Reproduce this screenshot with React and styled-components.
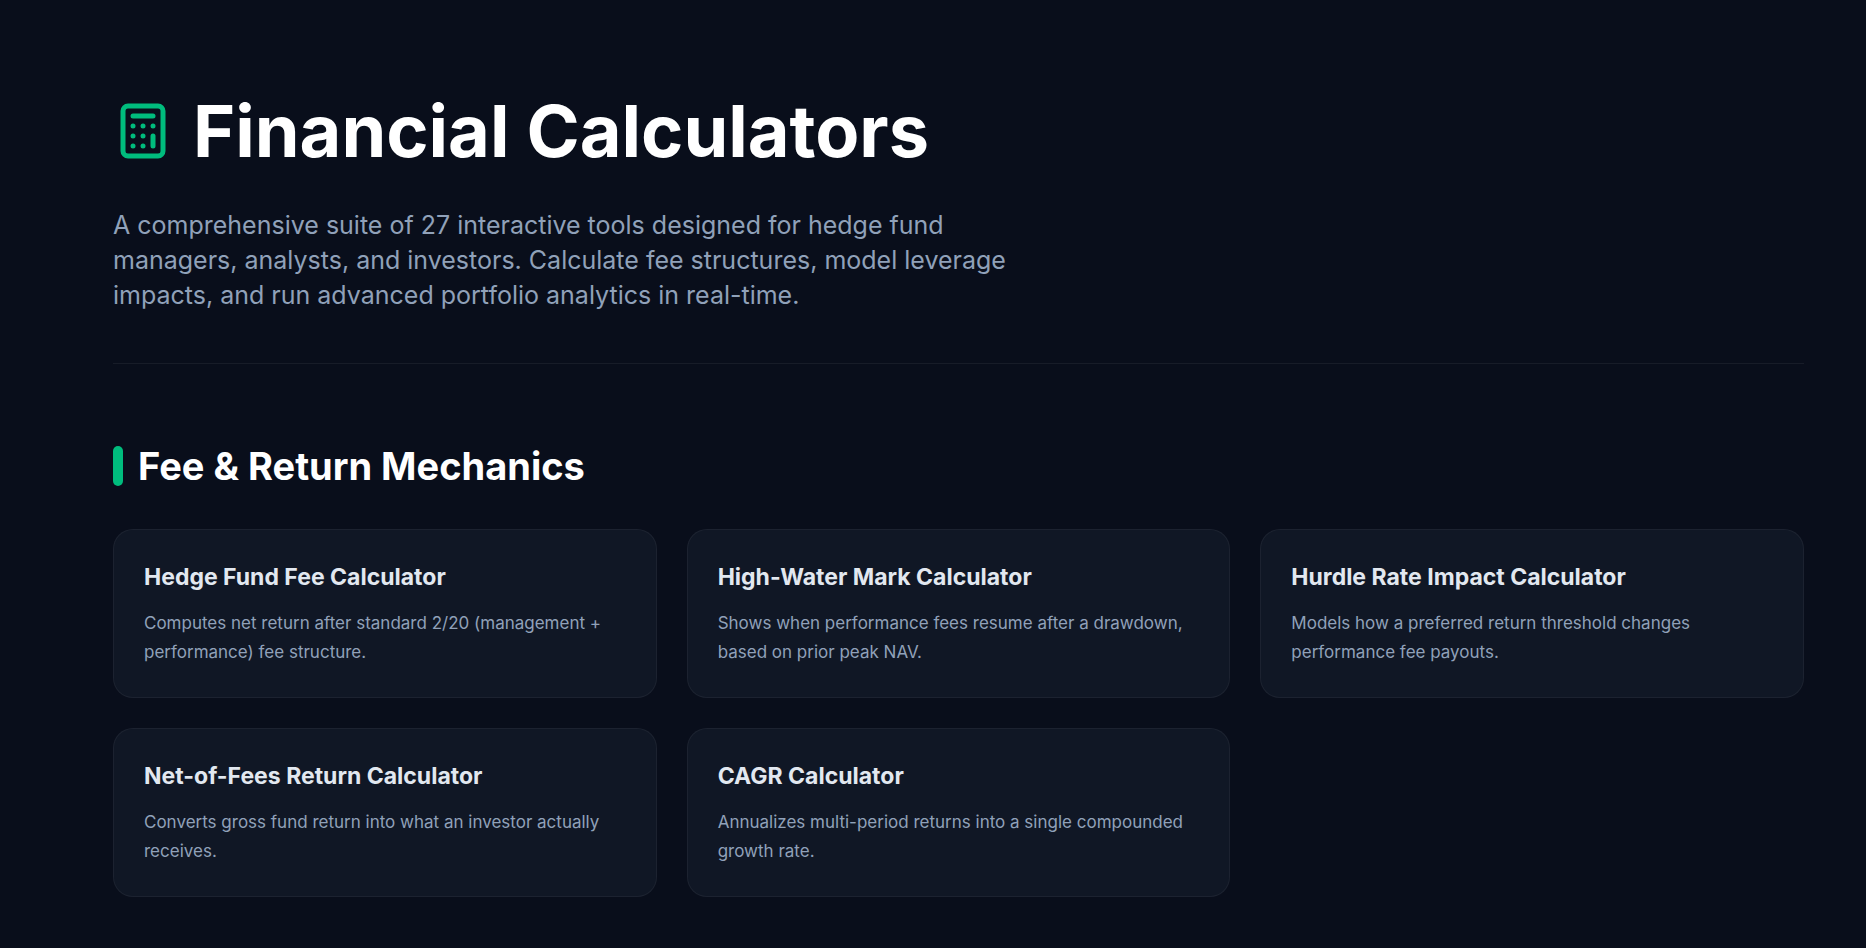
import React from 'react';
import { Calculator } from 'lucide-react';
import styled, { createGlobalStyle } from 'styled-components';

const feeTools = [
  {
    id: 'hedge-fund-fee',
    name: 'Hedge Fund Fee Calculator',
    description: 'Computes net return after standard 2/20 (management + performance) fee structure.',
  },
  {
    id: 'high-water-mark',
    name: 'High-Water Mark Calculator',
    description: 'Shows when performance fees resume after a drawdown, based on prior peak NAV.',
  },
  {
    id: 'hurdle-rate',
    name: 'Hurdle Rate Impact Calculator',
    description: 'Models how a preferred return threshold changes performance fee payouts.',
  },
  {
    id: 'net-of-fees',
    name: 'Net-of-Fees Return Calculator',
    description: 'Converts gross fund return into what an investor actually receives.',
  },
  {
    id: 'cagr',
    name: 'CAGR Calculator',
    description: 'Annualizes multi-period returns into a single compounded growth rate.',
  },
];

const App = () => {
  return (
    <>
      <GlobalStyle />
      <Page>
        <Header>
          <TitleRow>
            <Calculator size={60} color="#00bc7d" aria-hidden="true" />
            <Title>Financial Calculators</Title>
          </TitleRow>
          <Intro>
            A comprehensive suite of 27 interactive tools designed for hedge fund managers,
            analysts, and investors. Calculate fee structures, model leverage impacts, and run
            advanced portfolio analytics in real-time.
          </Intro>
        </Header>

        <section>
          <SectionTitle>
            <Accent />
            Fee &amp; Return Mechanics
          </SectionTitle>
          <CardGrid>
            {feeTools.map((tool) => (
              <Card key={tool.id} href={`#${tool.id}`}>
                <CardTitle>{tool.name}</CardTitle>
                <CardText>{tool.description}</CardText>
              </Card>
            ))}
          </CardGrid>
        </section>
      </Page>
    </>
  );
};

export default App;

const GlobalStyle = createGlobalStyle`
  * {
    box-sizing: border-box;
  }

  body {
    margin: 0;
    background-color: #090e1b;
    color: #ffffff;
    font-family: Inter, 'Liberation Sans', sans-serif;
  }
`;

const Page = styled.main`
  min-height: 100vh;
  padding: 93px 62px 50px 113px;

  @media (max-width: 900px) {
    padding: 40px 24px;
  }
`;

const Header = styled.header`
  padding-bottom: 50px;
  border-bottom: 1px solid rgba(255, 255, 255, 0.06);
  margin-bottom: 77px;
`;

const TitleRow = styled.div`
  display: flex;
  align-items: center;
  gap: 20px;
  margin-bottom: 40px;

  svg {
    flex-shrink: 0;
  }
`;

const Title = styled.h1`
  margin: 0;
  font-size: 72px;
  line-height: 75px;
  font-weight: 700;
`;

const Intro = styled.p`
  max-width: 940px;
  margin: 0;
  color: #90a1b9;
  font-size: 25px;
  line-height: 35px;
`;

const SectionTitle = styled.h2`
  display: flex;
  align-items: center;
  gap: 15px;
  margin: 0 0 38px;
  font-size: 38px;
  line-height: 50px;
  font-weight: 700;
`;

const Accent = styled.span`
  width: 10px;
  height: 40px;
  border-radius: 5px;
  background-color: #00bc7d;
`;

const CardGrid = styled.div`
  display: grid;
  grid-template-columns: repeat(3, 1fr);
  gap: 30px;

  @media (max-width: 1200px) {
    grid-template-columns: repeat(2, 1fr);
  }

  @media (max-width: 700px) {
    grid-template-columns: 1fr;
  }
`;

const Card = styled.a`
  padding: 30px;
  border: 1px solid rgba(255, 255, 255, 0.05);
  border-radius: 20px;
  background-color: #101725;
  color: inherit;
  text-decoration: none;
  transition: border-color 0.2s ease;

  &:hover {
    border-color: #00bc7d;
  }
`;

const CardTitle = styled.h3`
  margin: 0 0 14px;
  color: #e2e8f0;
  font-size: 23px;
  line-height: 35px;
  font-weight: 700;
`;

const CardText = styled.p`
  margin: 0;
  color: #90a1b9;
  font-size: 17px;
  line-height: 29px;
`;
